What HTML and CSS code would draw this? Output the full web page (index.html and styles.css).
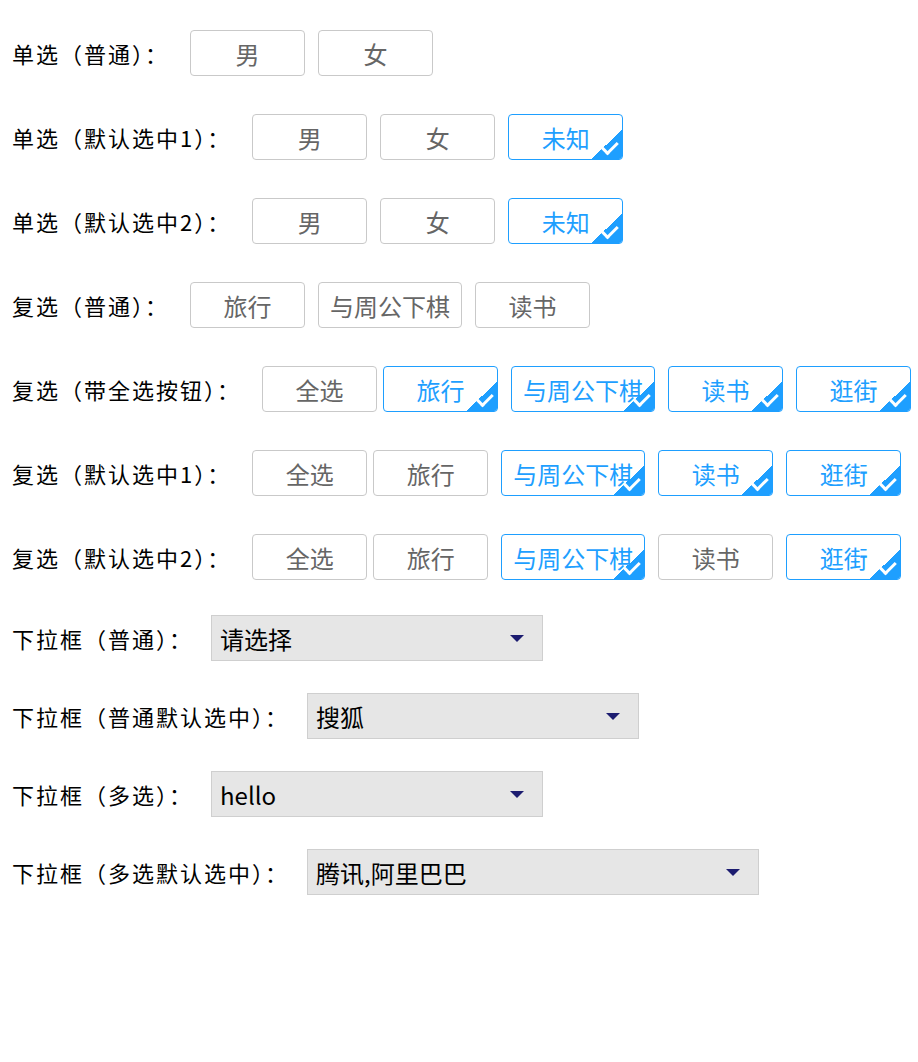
FILE: index.html
```html
<!DOCTYPE html>
<html lang="zh-CN">
<head>
    <meta charset="UTF-8">
    <meta name="viewport" content="width=device-width, initial-scale=1.0">
    <title>选择组件</title>
    <link rel="stylesheet" href="styles.css">
</head>
<body>
    <div class="page">
        <div class="row">
            <span class="label">单选（普通）：</span>
            <div class="options">
                <span class="opt">男</span>
                <span class="opt">女</span>
            </div>
        </div>

        <div class="row">
            <span class="label">单选（默认选中1）：</span>
            <div class="options">
                <span class="opt">男</span>
                <span class="opt">女</span>
                <span class="opt checked">未知</span>
            </div>
        </div>

        <div class="row">
            <span class="label">单选（默认选中2）：</span>
            <div class="options">
                <span class="opt">男</span>
                <span class="opt">女</span>
                <span class="opt checked">未知</span>
            </div>
        </div>

        <div class="row">
            <span class="label">复选（普通）：</span>
            <div class="options">
                <span class="opt">旅行</span>
                <span class="opt">与周公下棋</span>
                <span class="opt">读书</span>
            </div>
        </div>

        <div class="row">
            <span class="label">复选（带全选按钮）：</span>
            <div class="options">
                <span class="opt all">全选</span>
                <span class="opt checked">旅行</span>
                <span class="opt checked">与周公下棋</span>
                <span class="opt checked">读书</span>
                <span class="opt checked">逛街</span>
            </div>
        </div>

        <div class="row">
            <span class="label">复选（默认选中1）：</span>
            <div class="options">
                <span class="opt all">全选</span>
                <span class="opt">旅行</span>
                <span class="opt checked">与周公下棋</span>
                <span class="opt checked">读书</span>
                <span class="opt checked">逛街</span>
            </div>
        </div>

        <div class="row">
            <span class="label">复选（默认选中2）：</span>
            <div class="options">
                <span class="opt all">全选</span>
                <span class="opt">旅行</span>
                <span class="opt checked">与周公下棋</span>
                <span class="opt">读书</span>
                <span class="opt checked">逛街</span>
            </div>
        </div>

        <div class="row row-select">
            <span class="label">下拉框（普通）：</span>
            <div class="select">
                <span class="value">请选择</span>
                <svg class="arrow" width="14" height="7" viewBox="0 0 14 7"><path d="M0 0h14L7 7z"/></svg>
            </div>
        </div>

        <div class="row row-select">
            <span class="label">下拉框（普通默认选中）：</span>
            <div class="select">
                <span class="value">搜狐</span>
                <svg class="arrow" width="14" height="7" viewBox="0 0 14 7"><path d="M0 0h14L7 7z"/></svg>
            </div>
        </div>

        <div class="row row-select">
            <span class="label">下拉框（多选）：</span>
            <div class="select">
                <span class="value">hello</span>
                <svg class="arrow" width="14" height="7" viewBox="0 0 14 7"><path d="M0 0h14L7 7z"/></svg>
            </div>
        </div>

        <div class="row row-select">
            <span class="label">下拉框（多选默认选中）：</span>
            <div class="select wide">
                <span class="value">腾讯,阿里巴巴</span>
                <svg class="arrow" width="14" height="7" viewBox="0 0 14 7"><path d="M0 0h14L7 7z"/></svg>
            </div>
        </div>
    </div>
</body>
</html>
```

FILE: styles.css
```css
* {
    margin: 0;
    padding: 0;
    box-sizing: border-box;
}

body {
    background: #fff;
    font-family: "Noto Sans CJK SC", "Noto Sans", sans-serif;
    color: #000;
}

.page {
    padding: 30px 0 0 12px;
}

.row {
    display: flex;
    align-items: center;
    height: 46px;
    margin-bottom: 38px;
}

.row-select {
    margin-bottom: 32px;
}

.row:nth-child(7) {
    margin-bottom: 35px;
}

.label {
    font-size: 22px;
    letter-spacing: 2px;
    white-space: nowrap;
    margin-right: 21px;
}

.row-select .label {
    margin-right: 18px;
}

.options {
    display: flex;
}

.opt {
    position: relative;
    overflow: hidden;
    display: flex;
    align-items: center;
    justify-content: center;
    min-width: 115px;
    height: 46px;
    padding: 0 11px;
    margin-right: 13px;
    border: 1px solid #c9c9c9;
    border-radius: 4px;
    color: #666;
    font-size: 24px;
    white-space: nowrap;
}

.opt.all {
    margin-right: 6px;
}

.opt.checked {
    border-color: #1e9fff;
    color: #1e9fff;
}

/* corner triangle */
.opt.checked::after {
    content: "";
    position: absolute;
    right: 0;
    bottom: 0;
    width: 31px;
    height: 29px;
    background: linear-gradient(to bottom right, transparent 50%, #1e9fff 50%);
}

/* check mark */
.opt.checked::before {
    content: "";
    position: absolute;
    right: 4px;
    bottom: 8px;
    width: 13px;
    height: 6px;
    border-left: 3px solid #fff;
    border-bottom: 3px solid #fff;
    transform: rotate(-45deg);
    z-index: 1;
}

.select {
    display: flex;
    align-items: center;
    justify-content: space-between;
    width: 332px;
    height: 46px;
    padding: 0 18px 0 8px;
    background: #e6e6e6;
    border: 1px solid #cfcfcf;
    font-size: 24px;
}

.select.wide {
    width: 452px;
}

.arrow {
    fill: #1c1c70;
}
```
